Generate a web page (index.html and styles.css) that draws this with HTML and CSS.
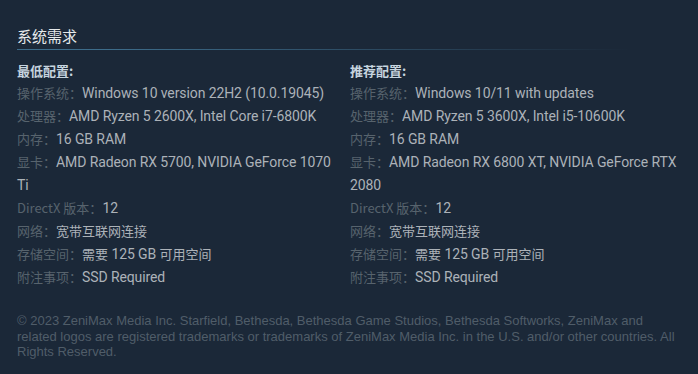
FILE: index.html
```html
<!DOCTYPE html>
<html lang="zh-CN">
<head>
<meta charset="utf-8">
<link rel="stylesheet" href="styles.css">
</head>
<body>
<div class="sysreq">
  <h2 class="block-title">系统需求</h2>
  <div class="cols">
    <ul class="col">
      <li class="col-head">最低配置:</li>
      <li><span class="k">操作系统：</span>Windows 10 version 22H2 (10.0.19045)</li>
      <li><span class="k">处理器：</span>AMD Ryzen 5 2600X, Intel Core i7-6800K</li>
      <li><span class="k">内存：</span>16 GB RAM</li>
      <li><span class="k">显卡：</span>AMD Radeon RX 5700, NVIDIA GeForce 1070 Ti</li>
      <li><span class="k">DirectX 版本：</span>12</li>
      <li><span class="k">网络：</span><span class="cjk">宽带互联网连接</span></li>
      <li><span class="k">存储空间：</span><span class="cjk">需要</span> 125 GB <span class="cjk">可用空间</span></li>
      <li><span class="k">附注事项：</span>SSD Required</li>
    </ul>
    <ul class="col">
      <li class="col-head">推荐配置:</li>
      <li><span class="k">操作系统：</span>Windows 10/11 with updates</li>
      <li><span class="k">处理器：</span>AMD Ryzen 5 3600X, Intel i5-10600K</li>
      <li><span class="k">内存：</span>16 GB RAM</li>
      <li><span class="k">显卡：</span>AMD Radeon RX 6800 XT, NVIDIA GeForce RTX 2080</li>
      <li><span class="k">DirectX 版本：</span>12</li>
      <li><span class="k">网络：</span><span class="cjk">宽带互联网连接</span></li>
      <li><span class="k">存储空间：</span><span class="cjk">需要</span> 125 GB <span class="cjk">可用空间</span></li>
      <li><span class="k">附注事项：</span>SSD Required</li>
    </ul>
  </div>
  <p class="legal">© 2023 ZeniMax Media Inc. Starfield, Bethesda, Bethesda Game Studios, Bethesda Softworks, ZeniMax and related logos are registered trademarks or trademarks of ZeniMax Media Inc. in the U.S. and/or other countries. All Rights Reserved.</p>
</div>
</body>
</html>
```

FILE: styles.css
```css
html, body {
  margin: 0;
  padding: 0;
  background: #1b2838;
}

.sysreq {
  padding: 26px 0 0 17px;
  width: 660px;
}

.block-title {
  margin: 0;
  width: 613px;
  padding-bottom: 3px;
  font-size: 15px;
  line-height: 20px;
  font-weight: normal;
  color: #e6e9eb;
  font-family: "Noto Sans CJK SC", sans-serif;
  border-bottom: 1px solid transparent;
  border-image: linear-gradient(to right, #3d6c8a 0%, #3d6c8a 15%, rgba(61, 108, 138, 0) 100%) 1;
}

.cols {
  display: grid;
  grid-template-columns: 320px 330px;
  column-gap: 13px;
  margin-top: 9px;
}

.col {
  list-style: none;
  margin: 0;
  padding: 0;
  font-family: Roboto, "Noto Sans CJK SC", sans-serif;
  font-size: 14px;
  letter-spacing: -0.1px;
  line-height: 23px;
  color: #acb2b8;
}

.col-head {
  color: #c6d4df;
  font-weight: bold;
  font-family: "Noto Sans CJK SC", sans-serif;
  font-size: 13px;
  letter-spacing: 0;
}

.k {
  color: #57636d;
  font-family: "Noto Sans CJK SC", sans-serif;
  font-size: 13px;
  letter-spacing: 0;
  line-height: 1;
}

.cjk {
  font-family: "Noto Sans CJK SC", sans-serif;
  font-size: 13px;
  letter-spacing: 0;
  line-height: 1;
}

.legal {
  margin: 24px 0 0;
  width: 660px;
  font-family: "Liberation Sans", sans-serif;
  font-size: 13px;
  line-height: 15.5px;
  color: #505d69;
}
```
